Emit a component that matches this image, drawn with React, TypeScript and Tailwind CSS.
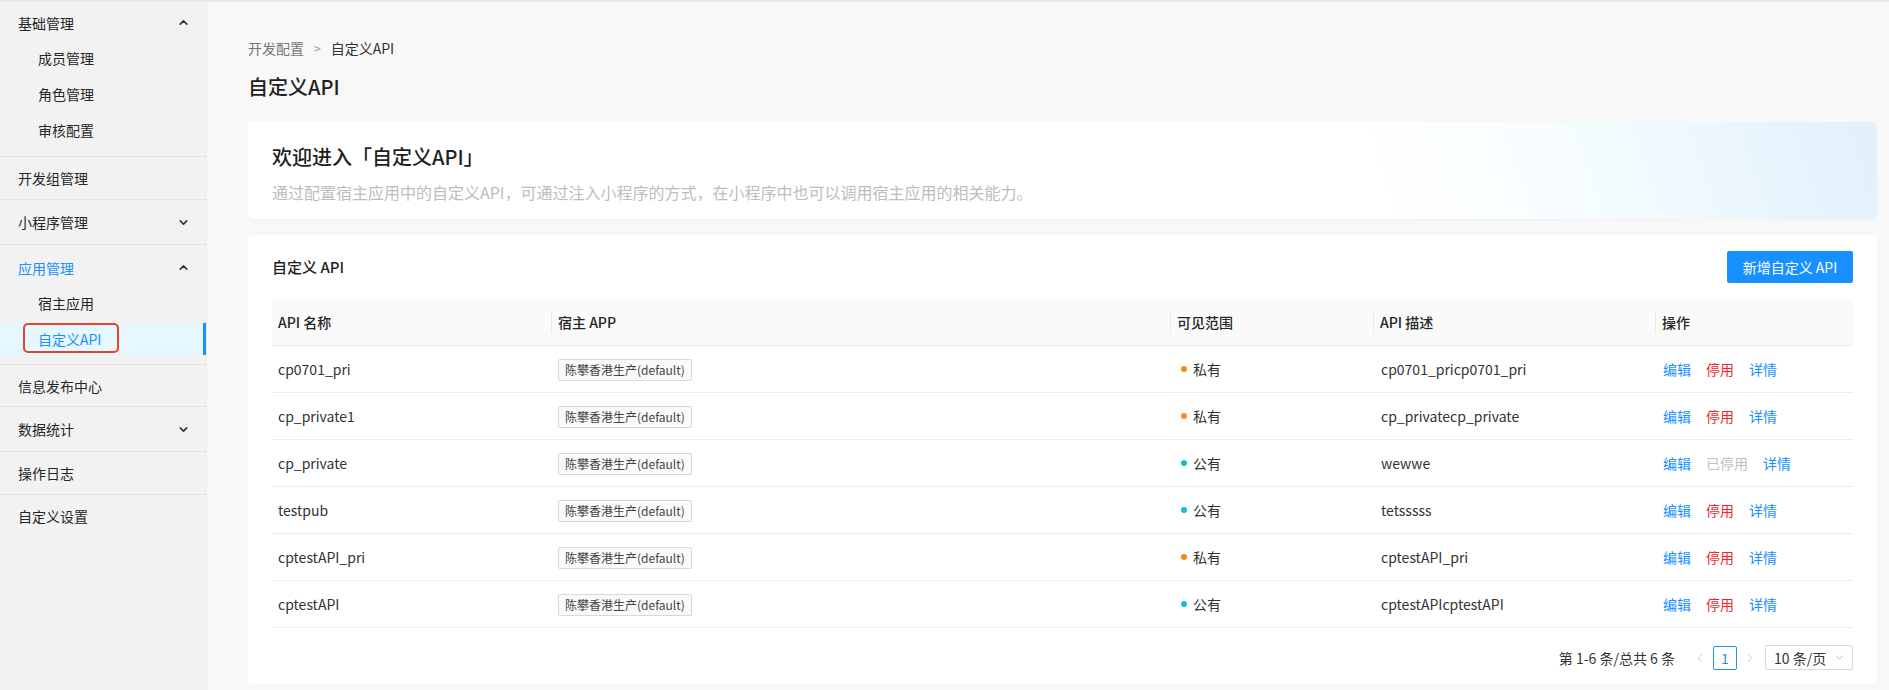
import React from 'react';
import { ChevronUp, ChevronDown, ChevronLeft, ChevronRight } from 'lucide-react';

type Row = {
  name: string;
  scope: 'private' | 'public';
  desc: string;
  stopped?: boolean;
};

const ROWS: Row[] = [
  { name: 'cp0701_pri', scope: 'private', desc: 'cp0701_pricp0701_pri' },
  { name: 'cp_private1', scope: 'private', desc: 'cp_privatecp_private' },
  { name: 'cp_private', scope: 'public', desc: 'wewwe', stopped: true },
  { name: 'testpub', scope: 'public', desc: 'tetsssss' },
  { name: 'cptestAPI_pri', scope: 'private', desc: 'cptestAPI_pri' },
  { name: 'cptestAPI', scope: 'public', desc: 'cptestAPIcptestAPI' },
];

const COLS = 'grid grid-cols-[279px_619px_203px_282px_1fr]';

// 侧边栏：一级分组 + 子菜单
const SideGroup: React.FC<{ title: string; active?: boolean; items: string[]; current?: string; pb: string }> = ({ title, active, items, current, pb }) => (
  <div className={`border-b border-[#e3e3e3] ${pb}`}>
    <div className={`h-[42px] pt-[3px] pl-[18px] pr-[16px] flex items-center justify-between ${active ? 'text-[#1890ff]' : 'text-[#262626]'}`}>
      <span>{title}</span>
      <ChevronUp className="w-[13px] h-[13px] text-[#333]" strokeWidth={3} />
    </div>
    <div className="flex flex-col gap-1">
      {items.map(it => (
        <div
          key={it}
          className={`relative h-8 pl-[38px] flex items-center ${it === current ? 'bg-[#e6f7ff] text-[#1890ff] border-r-[3px] border-[#1890ff]' : 'text-[#262626]'}`}
        >
          {it}
          {it === current && (
            <span className="absolute left-[23px] top-0 w-[96px] h-[30px] border-2 border-[#e8412c] rounded-[5px]" />
          )}
        </div>
      ))}
    </div>
  </div>
);

const SideItem: React.FC<{ title: string; arrow?: boolean; h: string }> = ({ title, arrow, h }) => (
  <div className={`${h} border-b border-[#e3e3e3] pl-[18px] pr-[16px] flex items-center justify-between text-[#262626]`}>
    <span>{title}</span>
    {arrow && <ChevronDown className="w-[13px] h-[13px] text-[#333]" strokeWidth={3} />}
  </div>
);

const Dot: React.FC<{ scope: Row['scope'] }> = ({ scope }) => (
  <span className={`w-[6px] h-[6px] rounded-full ${scope === 'private' ? 'bg-[#fa8c16]' : 'bg-[#13c2c2]'}`} />
);

export default function App() {
  return (
    <div
      className="relative flex h-[690px] w-full overflow-hidden text-[14px] leading-[22px] text-[#333]"
      style={{ fontFamily: '"Noto Sans CJK SC", "Noto Sans", sans-serif' }}
    >
      <div className="absolute top-0 left-0 right-0 h-[3px] bg-gradient-to-b from-[#e4e4e4] to-transparent" />

      <aside className="w-[207px] shrink-0 bg-[#f2f2f2] border-r border-[#ececec]">
        <SideGroup title="基础管理" pb="pb-[10px]" items={['成员管理', '角色管理', '审核配置']} />
        <SideItem title="开发组管理" h="h-[43px]" />
        <SideItem title="小程序管理" h="h-[45px]" arrow />
        <SideGroup title="应用管理" pb="pb-[9px]" active items={['宿主应用', '自定义API']} current="自定义API" />
        <SideItem title="信息发布中心" h="h-[42px]" />
        <SideItem title="数据统计" h="h-[45px]" arrow />
        <SideItem title="操作日志" h="h-[43px]" />
        <div className="h-[42px] pl-[18px] flex items-center text-[#262626]">自定义设置</div>
      </aside>

      <main className="flex-1 bg-[#f8f8f8] pl-[41px] pr-[12px] pt-[37px]">
        <div className="flex items-center gap-[10px] text-[#777]">
          <span>开发配置</span>
          <span className="text-[12px] text-[#999]">&gt;</span>
          <span className="text-[#333]">自定义API</span>
        </div>
        <h1 className="mt-[14px] text-[20px] leading-[28px] font-medium text-[#1f1f1f]">自定义API</h1>

        <section className="mt-[21px] rounded-[5px] px-6 pt-[21px] pb-[15px] bg-[linear-gradient(252deg,#e1f0fc_0%,#eef8fe_12%,#f7fdff_20%,#ffffff_32%)] shadow-[0_1px_2px_rgba(0,0,0,0.03)]">
          <h2 className="text-[20px] leading-[28px] font-medium text-[#1f1f1f]">欢迎进入「自定义API」</h2>
          <p className="mt-[9px] text-[16px] leading-[24px] text-[#bdbdbd]">
            通过配置宿主应用中的自定义API，可通过注入小程序的方式，在小程序中也可以调用宿主应用的相关能力。
          </p>
        </section>

        <section className="mt-4 rounded-[5px] bg-white px-6 pt-4 pb-[14px]">
          <div className="flex items-center justify-between">
            <h3 className="text-[15px] font-medium text-[#1f1f1f]">自定义 API</h3>
            <button className="h-8 w-[126px] rounded-[2px] bg-[#1890ff] text-white text-[14px]">新增自定义 API</button>
          </div>

          <div className="mt-4">
            <div className={`${COLS} h-[47px] bg-[#fafafa] border-b border-[#ededed] font-medium text-[#262626]`}>
              {['API 名称', '宿主 APP', '可见范围', 'API 描述', '操作'].map((h, i) => (
                <div key={h} className="flex items-center">
                  {i > 0 && <span className="w-px h-[22px] bg-[#ececec] mr-[6px]" />}
                  <span className={i === 0 ? 'pl-[6px]' : ''}>{h}</span>
                </div>
              ))}
            </div>

            {ROWS.map(r => (
              <div key={r.name} className={`${COLS} h-[47px] border-b border-[#ededed] items-center text-[#333]`}>
                <div className="pl-[6px]">{r.name}</div>
                <div className="pl-[7px]">
                  <span className="inline-block h-[22px] px-[6px] leading-[20px] text-[12px] border border-[#d9d9d9] bg-[#fafafa] rounded-[2px] text-[#444]">
                    陈攀香港生产(default)
                  </span>
                </div>
                <div className="pl-[11px] flex items-center gap-[6px]">
                  <Dot scope={r.scope} />
                  <span>{r.scope === 'private' ? '私有' : '公有'}</span>
                </div>
                <div className="pl-[8px]">{r.desc}</div>
                <div className="pl-[8px] flex items-center gap-[15px]">
                  <span className="text-[#1890ff]">编辑</span>
                  {r.stopped ? (
                    <span className="text-[#bfbfbf]">已停用</span>
                  ) : (
                    <span className="text-[#f5222d]">停用</span>
                  )}
                  <span className="text-[#1890ff]">详情</span>
                </div>
              </div>
            ))}
          </div>

          <div className="mt-[17px] flex items-center justify-end">
            <span className="text-[#333]">第 1-6 条/总共 6 条</span>
            <ChevronLeft className="ml-[18px] w-[14px] h-[14px] text-[#c4c4c4]" strokeWidth={1.5} />
            <span className="ml-[6px] w-6 h-6 flex items-center justify-center border border-[#1890ff] rounded-[2px] text-[#1890ff]">1</span>
            <ChevronRight className="ml-[6px] w-[14px] h-[14px] text-[#c4c4c4]" strokeWidth={1.5} />
            <div className="ml-[8px] w-[88px] h-[25px] border border-[#d9d9d9] rounded-[2px] flex items-center justify-between pl-[8px] pr-[6px]">
              <span className="text-[#333]">10 条/页</span>
              <ChevronDown className="w-[13px] h-[13px] text-[#b0b0b0]" strokeWidth={1.5} />
            </div>
          </div>
        </section>
      </main>
    </div>
  );
}
